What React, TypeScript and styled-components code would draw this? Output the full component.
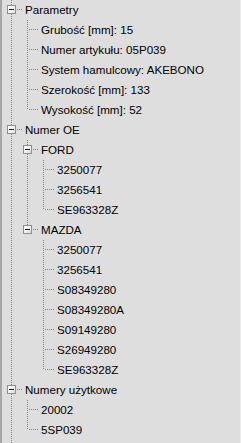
import React from 'react';
import styled, { createGlobalStyle, css } from 'styled-components';

const GlobalStyle = createGlobalStyle`
  html, body {
    margin: 0;
    padding: 0;
    background: #dedede;
  }
  * {
    box-sizing: border-box;
  }
`;

const LINE = '#858585';

const vDots = css`
  background-image: linear-gradient(to bottom, ${LINE} 1px, transparent 1px);
  background-size: 1px 2px;
  background-repeat: repeat-y;
`;

const hDots = css`
  background-image: linear-gradient(to right, ${LINE} 1px, transparent 1px);
  background-size: 2px 1px;
  background-repeat: repeat-x;
`;

const Panel = styled.div`
  width: 241px;
  height: 443px;
  overflow: hidden;
  display: flex;
  flex-direction: column;
  background: #dedede;
  border-left: 2px solid #a6a6a6;
  border-right: 1px solid #ececec;
  font-family: 'Liberation Sans', Arial, sans-serif;
  font-size: 11.6px;
  color: #000;
`;

const RootList = styled.ul`
  flex: 1;
  position: relative;
  list-style: none;
  margin: 0;
  padding: 0;

  &::before {
    content: '';
    position: absolute;
    left: 9px;
    top: 0;
    bottom: 0;
    width: 1px;
    ${vDots}
  }
`;

const ChildList = styled.ul`
  list-style: none;
  margin: 0;
  padding: 0 0 0 16px;
`;

const Item = styled.li<{ $last: boolean }>`
  position: relative;

  &::before {
    content: '';
    position: absolute;
    left: 9px;
    top: 0;
    width: 1px;
    height: ${({ $last }) => ($last ? '10px' : '100%')};
    ${vDots}
  }
`;

const Row = styled.div`
  position: relative;
  height: 20px;
  line-height: 19px;
  padding-left: 23px;
  white-space: nowrap;

  &::after {
    content: '';
    position: absolute;
    left: 11px;
    top: 9px;
    width: 10px;
    height: 1px;
    ${hDots}
  }
`;

const Toggle = styled.span`
  position: absolute;
  left: 5px;
  top: 5px;
  width: 9px;
  height: 9px;
  border: 1px solid #8f8f8f;
  background: linear-gradient(135deg, #ffffff 0%, #f0f0f0 60%, #d8d8d8 100%);
  z-index: 1;

  &::before {
    content: '';
    position: absolute;
    left: 1px;
    top: 3px;
    width: 5px;
    height: 1px;
    background: #1a1a1a;
  }
`;

interface TreeNode {
  label: string;
  children?: TreeNode[];
}

const data: TreeNode[] = [
  {
    label: 'Parametry',
    children: [
      { label: 'Grubość [mm]: 15' },
      { label: 'Numer artykułu: 05P039' },
      { label: 'System hamulcowy: AKEBONO' },
      { label: 'Szerokość [mm]: 133' },
      { label: 'Wysokość [mm]: 52' },
    ],
  },
  {
    label: 'Numer OE',
    children: [
      {
        label: 'FORD',
        children: [
          { label: '3250077' },
          { label: '3256541' },
          { label: 'SE963328Z' },
        ],
      },
      {
        label: 'MAZDA',
        children: [
          { label: '3250077' },
          { label: '3256541' },
          { label: 'S08349280' },
          { label: 'S08349280A' },
          { label: 'S09149280' },
          { label: 'S26949280' },
          { label: 'SE963328Z' },
        ],
      },
    ],
  },
  {
    label: 'Numery użytkowe',
    children: [{ label: '20002' }, { label: '5SP039' }],
  },
];

const TreeItem: React.FC<{ node: TreeNode; last: boolean }> = ({ node, last }) => (
  <Item $last={last}>
    <Row>
      {node.children && <Toggle />}
      {node.label}
    </Row>
    {node.children && (
      <ChildList>
        {node.children.map((child, i) => (
          <TreeItem
            key={child.label + i}
            node={child}
            last={i === node.children!.length - 1}
          />
        ))}
      </ChildList>
    )}
  </Item>
);

const App: React.FC = () => (
  <>
    <GlobalStyle />
    <Panel>
      <RootList>
        {data.map((node) => (
          <TreeItem key={node.label} node={node} last={false} />
        ))}
      </RootList>
    </Panel>
  </>
);

export default App;
